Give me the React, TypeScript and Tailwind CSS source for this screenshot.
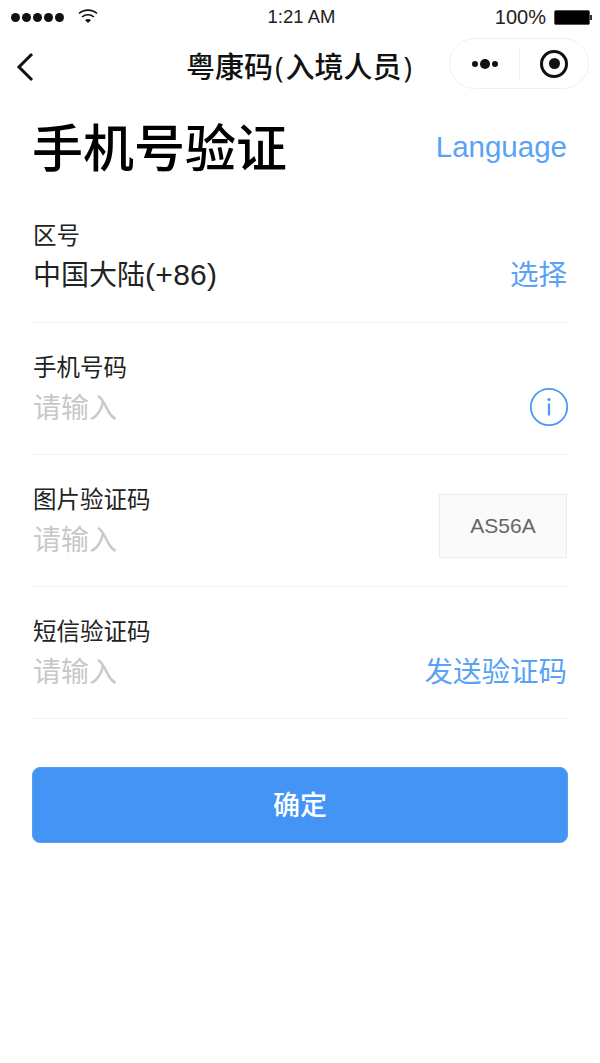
const font = { fontFamily: '"Open Sans", "Noto Sans CJK SC", sans-serif' }

function Field({ label, children, right }: { label: string; children: React.ReactNode; right?: React.ReactNode }) {
  return (
    <div className="flex h-[132px] items-start justify-between border-b border-[#f3f3f3] pt-[30px]">
      <div className="pl-px">
        <div className="text-[23.5px] leading-[30px] text-[#222]">{label}</div>
        <div className="mt-[6px] text-[28px] leading-[36px]">{children}</div>
      </div>
      {right}
    </div>
  )
}

function Placeholder() {
  return <span className="block pt-[2px] text-[#c8c8c8]">请输入</span>
}

export default function App() {
  return (
    <div className="h-[1063px] w-[600px] overflow-hidden bg-white font-['Liberation_Sans','Noto_Sans_CJK_SC',sans-serif]">
      {/* Status bar */}
      <div className="flex h-[34px] items-center justify-between pl-[11px] pr-[8px] text-[#222]">
        <div className="flex w-[200px] items-center gap-[2px]">
          {[0, 1, 2, 3, 4].map((i) => (
            <div key={i} className="h-[9px] w-[9px] rounded-full bg-[#111]" />
          ))}
          <svg width="20" height="16" viewBox="0 0 20 16" className="ml-[12px] mb-[3px]">
            <path d="M1 5.5C6 1 14 1 19 5.5" fill="none" stroke="#111" strokeWidth="1.6" />
            <path d="M4 9C7.5 6 12.5 6 16 9" fill="none" stroke="#111" strokeWidth="1.6" />
            <path d="M7 12C8.8 10.6 11.2 10.6 13 12L10 15Z" fill="#111" />
          </svg>
        </div>
        <div className="text-[18.5px]">1:21 AM</div>
        <div className="flex w-[200px] items-center justify-end gap-[8px]">
          <span className="text-[20px]">100%</span>
          <div className="flex items-center">
            <div className="h-[15px] w-[36px] rounded-[2px] border border-[#555] bg-black" />
            <div className="h-[5px] w-[2px] bg-[#333]" />
          </div>
        </div>
      </div>

      {/* Nav bar */}
      <div className="relative flex h-[66px] items-center justify-center">
        <svg width="20" height="32" viewBox="0 0 20 32" className="absolute left-[15px] top-[17px]">
          <path d="M17 3L4 16L17 29" fill="none" stroke="#111" strokeWidth="3" />
        </svg>
        <div className="text-[29px] font-medium text-[#111]" style={font}>
          粤康码<span className="px-[2px]">(</span>入境人员<span className="px-[2px]">)</span>
        </div>
        <div className="absolute left-[449px] top-[4px] flex h-[51px] w-[140px] items-center rounded-full border border-[#f0f0f0]">
          <div className="flex w-[69px] items-center justify-center gap-[2px]">
            <div className="h-[6px] w-[6px] rounded-full bg-[#111]" />
            <div className="h-[10px] w-[10px] rounded-full bg-[#111]" />
            <div className="h-[6px] w-[6px] rounded-full bg-[#111]" />
          </div>
          <div className="h-[30px] w-px bg-[#eee]" />
          <div className="flex flex-1 items-center justify-center">
            <div className="flex h-[28px] w-[28px] items-center justify-center rounded-full border-[3px] border-[#111]">
              <div className="h-[11px] w-[11px] rounded-full bg-[#111]" />
            </div>
          </div>
        </div>
      </div>

      <div className="px-[32px]">
        {/* Heading */}
        <div className="flex h-[91px] items-center justify-between pt-[3px]">
          <h1 className="text-[51px] font-medium text-black" style={font}>手机号验证</h1>
          <span className="mr-px text-[29.5px] text-[#5aa2f5]">Language</span>
        </div>

        <Field label="区号" right={<span className="mr-px mt-[36px] text-[28.5px] leading-[36px] text-[#5aa2f5]">选择</span>}>
          <span className="text-[#222]">中国大陆<span className="text-[30px] tracking-[0.3px]">(+86)</span></span>
        </Field>
        <Field
          label="手机号码"
          right={
            <svg width="40" height="40" viewBox="0 0 40 40" className="mt-[34px] -mr-px">
              <circle cx="20" cy="20" r="18.2" fill="none" stroke="#4a98f5" strokeWidth="1.8" />
              <circle cx="20" cy="12.5" r="1.6" fill="#4a98f5" />
              <rect x="18.9" y="16.5" width="2.2" height="12" fill="#4a98f5" />
            </svg>
          }
        >
          <Placeholder />
        </Field>
        <Field
          label="图片验证码"
          right={
            <div className="mr-px mt-[9px] flex h-[64px] w-[128px] items-center justify-center border border-[#ececec] bg-[#fafafa] text-[21px] text-[#666]">
              AS56A
            </div>
          }
        >
          <Placeholder />
        </Field>
        <Field label="短信验证码" right={<span className="mr-px mt-[37px] text-[28.5px] leading-[36px] text-[#5aa2f5]">发送验证码</span>}>
          <Placeholder />
        </Field>

        <button className="mt-[48px] flex h-[76px] w-full items-center justify-center rounded-[8px] border border-[#5b9ee8] bg-[#4394f5] text-[27px] font-medium text-white" style={font}>
          确定
        </button>
      </div>
    </div>
  )
}
